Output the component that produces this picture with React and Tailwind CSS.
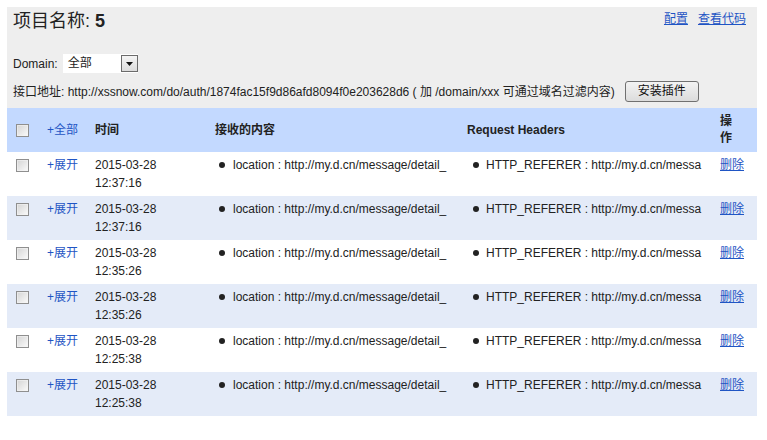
import React from "react";

const rows = [
  ["2015-03-28", "12:37:16"],
  ["2015-03-28", "12:37:16"],
  ["2015-03-28", "12:35:26"],
  ["2015-03-28", "12:35:26"],
  ["2015-03-28", "12:25:38"],
  ["2015-03-28", "12:25:38"],
];

function Box() {
  return (
    <span className="block w-[13px] h-[13px] border border-[#8f8f8f] bg-linear-to-br from-[#d4d4d4] to-[#fbfbfb] box-border">
      <span className="block w-full h-full border border-[#f4f4f4] opacity-60"></span>
    </span>
  );
}

export default function App() {
  return (
    <div className="bg-white min-h-[440px] pt-[7px] text-[12px] text-[#222] font-['Liberation_Sans','Noto_Sans_CJK_SC',sans-serif]">
      <div className="mx-[7px] bg-[#eeeeee] w-[750px]">
        <div className="flex justify-between items-start pl-[6px] pr-[11px] pt-[2px]">
          <div className="text-[18px] leading-[24px] text-[#222]">
            项目名称: <span className="font-bold">5</span>
          </div>
          <div className="flex gap-[10px] leading-[18px] pt-[1px]">
            <a className="text-[#1f55c4] underline">配置</a>
            <a className="text-[#1f55c4] underline">查看代码</a>
          </div>
        </div>
        <div className="flex items-center h-[19px] mt-[21px] pl-[6px]">
          <span>Domain:</span>
          <div className="ml-[5px] w-[75px] h-[19px] bg-white flex items-center justify-between">
            <span className="pl-[5px] leading-[19px]">全部</span>
            <span className="w-[17px] h-[17px] border border-[#6b6b6b] bg-linear-to-b from-[#f4f4f4] to-[#dcdcdc] flex items-center justify-center box-border">
              <svg width="7" height="4" viewBox="0 0 7 4">
                <polygon points="0,0 7,0 3.5,4" fill="#111" />
              </svg>
            </span>
          </div>
        </div>
        <div className="flex items-center h-[21px] mt-[8px] mb-[6px] pl-[6px]">
          <span className="whitespace-nowrap">
            接口地址: http://xssnow.com/do/auth/1874fac15f9d86afd8094f0e203628d6 ( 加 /domain/xxx 可通过域名过滤内容)
          </span>
          <button className="ml-[10px] h-[21px] px-[12px] border border-[#707070] rounded-[3px] bg-linear-to-b from-[#f3f3f3] to-[#dcdcdc] text-[12px] leading-[19px] text-[#111]">
            安装插件
          </button>
        </div>
        <table className="table-fixed w-full border-collapse">
          <colgroup>
            <col className="w-[33px]" />
            <col className="w-[48px]" />
            <col className="w-[120px]" />
            <col className="w-[252px]" />
            <col className="w-[253px]" />
            <col className="w-[44px]" />
          </colgroup>
          <thead>
            <tr className="bg-[#c3d9ff] h-[44px]">
              <th className="pl-[9px] align-middle text-left"><Box /></th>
              <th className="pl-[7px] align-middle text-left font-normal text-[#1f55c4] whitespace-nowrap">+全部</th>
              <th className="pl-[7px] align-middle text-left font-bold">时间</th>
              <th className="pl-[7px] align-middle text-left font-bold">接收的内容</th>
              <th className="pl-[7px] align-middle text-left font-bold">Request Headers</th>
              <th className="pl-[7px] align-middle text-left font-bold leading-[17px]">操<br />作</th>
            </tr>
          </thead>
          <tbody>
            {rows.map((r, i) => (
              <tr key={i} className={i % 2 === 0 ? "bg-white h-[44px]" : "bg-[#e4ebf8] h-[44px]"}>
                <td className="pl-[9px] pt-[7px] align-top"><Box /></td>
                <td className="pl-[7px] pt-[4px] align-top leading-[18px] text-[#1f55c4] whitespace-nowrap">+展开</td>
                <td className="pl-[7px] pt-[4px] align-top leading-[18px]">
                  <div>{r[0]}</div>
                  <div>{r[1]}</div>
                </td>
                <td className="pt-[4px] align-top leading-[18px] overflow-hidden">
                  <div className="flex items-center pl-[11px] gap-[8px] whitespace-nowrap">
                    <span className="w-[6px] h-[6px] rounded-full bg-[#222] shrink-0"></span>
                    <span>location : http://my.d.cn/message/detail_</span>
                  </div>
                </td>
                <td className="pt-[4px] align-top leading-[18px] overflow-hidden">
                  <div className="flex items-center pl-[13px] gap-[7px] whitespace-nowrap">
                    <span className="w-[6px] h-[6px] rounded-full bg-[#222] shrink-0"></span>
                    <span>HTTP_REFERER : http://my.d.cn/messa</span>
                  </div>
                </td>
                <td className="pl-[7px] pt-[4px] align-top leading-[18px]">
                  <a className="text-[#1f55c4] underline whitespace-nowrap">删除</a>
                </td>
              </tr>
            ))}
          </tbody>
        </table>
      </div>
    </div>
  );
}
